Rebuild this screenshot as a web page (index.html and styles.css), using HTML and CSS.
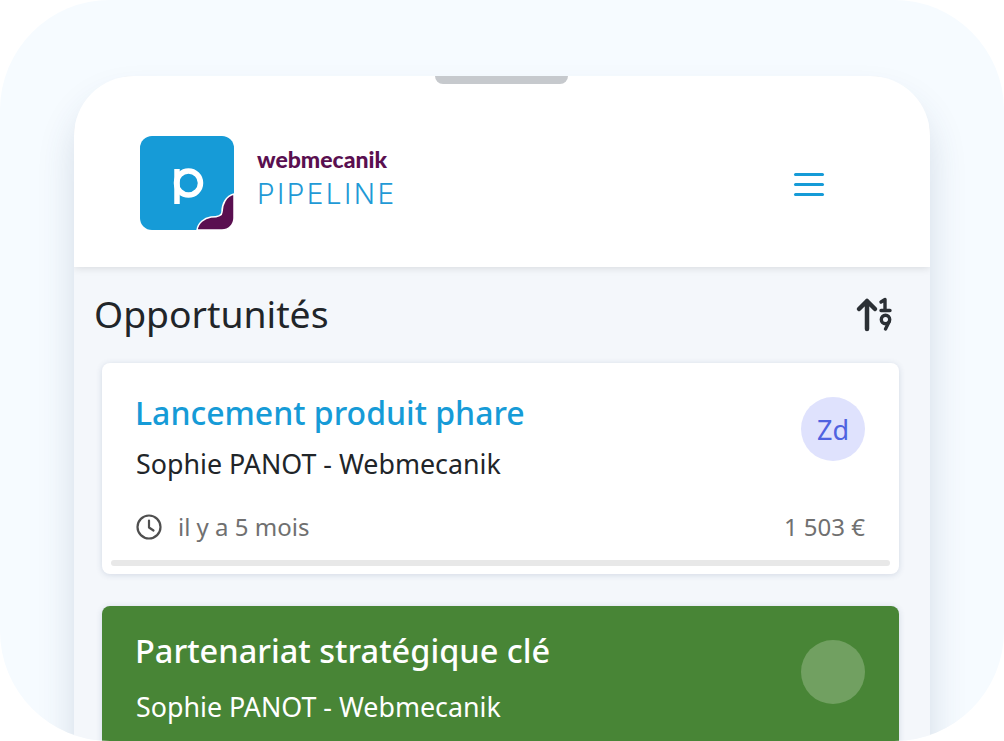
FILE: index.html
```html
<!DOCTYPE html>
<html lang="fr">
<head>
  <meta charset="UTF-8" />
  <meta name="viewport" content="width=device-width, initial-scale=1.0"/>
  <title>Webmecanik Pipeline</title>
  <link rel="stylesheet" href="styles.css">
</head>
<body>
  <div class="frame">
    <div class="phone">
      <div class="notch"></div>

      <header class="topbar">
        <div class="brand">
          <svg class="logo" width="94" height="94" viewBox="0 0 94 94">
            <rect width="94" height="94" rx="12" fill="#169bd7"/>
            <path d="M57 94 C58 87 64 82 71 81 C78 81 82 80 82 76 C82 68 86 60 94 58 V82 A12 12 0 0 1 82 94 Z" fill="#5a0f50" stroke="#fff" stroke-width="1.5"/>
            <path d="M37 68 V33" fill="none" stroke="#fff" stroke-width="5.5"/>
            <circle cx="48.5" cy="47" r="12" fill="none" stroke="#fff" stroke-width="5.5"/>
          </svg>
          <div class="brand-text">
            <div class="brand-name">webmecanik</div>
            <div class="brand-product">PIPELINE</div>
          </div>
        </div>
        <button class="menu-btn" aria-label="Menu">
          <span></span><span></span><span></span>
        </button>
      </header>

      <main class="content">
        <div class="title-row">
          <h1>Opportunités</h1>
          <svg class="sort-icon" width="38" height="36" viewBox="0 0 38 36">
            <path d="M12 33 V5 M4 13 L12 5 L20 13" fill="none" stroke="#2b3035" stroke-width="4.5" stroke-linecap="round" stroke-linejoin="round"/>
            <path d="M26 6 L30 3.5 V14 M26 14.5 H35" fill="none" stroke="#2b3035" stroke-width="3.4" stroke-linecap="round" stroke-linejoin="round"/>
            <circle cx="30.5" cy="23.5" r="4.2" fill="none" stroke="#2b3035" stroke-width="3.4"/>
            <path d="M34 26 L30.5 33" fill="none" stroke="#2b3035" stroke-width="3.4" stroke-linecap="round"/>
          </svg>
        </div>

        <article class="card">
          <div class="card-top">
            <div>
              <h2 class="card-title">Lancement produit phare</h2>
              <p class="card-contact">Sophie PANOT - Webmecanik</p>
            </div>
            <div class="avatar">Zd</div>
          </div>
          <div class="card-bottom">
            <div class="card-date">
              <svg width="26" height="26" viewBox="0 0 26 26">
                <circle cx="13" cy="13" r="11.5" fill="none" stroke="#4f4f4f" stroke-width="2.2"/>
                <path d="M13 6.5 V13.5 L17.5 16.5" fill="none" stroke="#4f4f4f" stroke-width="2.2" stroke-linecap="round" stroke-linejoin="round"/>
              </svg>
              <span>il y a 5 mois</span>
            </div>
            <div class="card-amount">1 503 €</div>
          </div>
          <div class="progress"></div>
        </article>

        <article class="card card-won">
          <div class="card-top">
            <div>
              <h2 class="card-title">Partenariat stratégique clé</h2>
              <p class="card-contact">Sophie PANOT - Webmecanik</p>
            </div>
            <div class="avatar"></div>
          </div>
        </article>
      </main>
    </div>
  </div>
</body>
</html>
```

FILE: styles.css
```css
html, body {
  margin: 0;
  height: 100%;
  background: #fff;
  overflow: hidden;
}
body {
  font-family: 'Noto Sans', 'Open Sans', sans-serif;
  color: #212529;
}
.frame {
  height: 741px;
  box-sizing: border-box;
  padding: 76px 74px 0;
  background: #f6fbff;
  border-radius: 110px;
  overflow: hidden;
}
.phone {
  position: relative;
  height: 720px;
  background: #f4f7fb;
  border-radius: 60px 60px 0 0;
  box-shadow: 0 24px 36px rgba(50, 70, 110, 0.17);
  overflow: hidden;
}
.notch {
  position: absolute;
  top: 0;
  left: 361px;
  z-index: 2;
  width: 133px;
  height: 8px;
  background: #c6c9cd;
  border-radius: 0 0 8px 8px;
}
.topbar {
  display: flex;
  justify-content: space-between;
  align-items: center;
  height: 191px;
  box-sizing: border-box;
  padding: 22px 106px 0 66px;
  background: #fff;
  box-shadow: 0 1px 8px rgba(0, 0, 0, 0.12);
  position: relative;
}
.brand {
  display: flex;
  align-items: center;
  gap: 23px;
}
.logo {
  display: block;
}
.brand-name {
  font-family: 'Lato', sans-serif;
  font-size: 23px;
  font-weight: 900;
  line-height: 24px;
  margin: -8px 0 6px;
  color: #5a0f50;
}
.brand-product {
  font-family: 'Inter', sans-serif;
  font-size: 28px;
  font-weight: 300;
  line-height: 34px;
  letter-spacing: 2.4px;
  color: #1f9ad6;
}
.menu-btn {
  display: flex;
  flex-direction: column;
  gap: 7px;
  width: 30px;
  padding: 0;
  margin-top: 3px;
  background: none;
  border: none;
}
.menu-btn span {
  height: 3px;
  background: #169bd7;
  border-radius: 2px;
}
.content {
  padding: 0 31px 0 28px;
}
.title-row {
  display: flex;
  justify-content: space-between;
  align-items: center;
  height: 96px;
  margin: 0 6px 0 -8px;
}
h1 {
  margin: -4px 0 0;
  font-size: 37.3px;
  font-weight: 400;
}
.sort-icon {
  display: block;
  margin-top: -3px;
}
.card {
  height: 211px;
  box-sizing: border-box;
  margin-bottom: 32px;
  padding: 32px 34px 0 33px;
  background: #fff;
  border-radius: 8px;
  box-shadow: 0 1px 6px rgba(40, 60, 110, 0.16);
  position: relative;
}
.card-top {
  display: flex;
  justify-content: space-between;
}
.card-title {
  margin: 0;
  font-size: 32px;
  font-weight: 500;
  line-height: 36px;
  color: #169bd7;
}
.card-contact {
  margin: 16px 0 0 1px;
  font-size: 26.8px;
  line-height: 34px;
}
.avatar {
  display: flex;
  align-items: center;
  justify-content: center;
  width: 64px;
  height: 64px;
  margin-top: 2px;
  background: #dfe2fd;
  border-radius: 50%;
  color: #4f63e0;
  font-size: 27px;
}
.card-bottom {
  display: flex;
  justify-content: space-between;
  align-items: center;
  margin-top: 29px;
  font-size: 24px;
  color: #707070;
}
.card-date {
  display: flex;
  align-items: center;
  gap: 16px;
  margin-left: 1px;
}
.card-date svg {
  display: block;
}
.progress {
  position: absolute;
  left: 9px;
  right: 9px;
  bottom: 8px;
  height: 6px;
  background: #e8e8e8;
  border-radius: 3px;
}
.card-won {
  background: #488536;
}
.card-won .card-title {
  margin-top: -5px;
  font-size: 32.5px;
  color: #fff;
}
.card-won .card-contact {
  margin-top: 21px;
  color: #fff;
}
.card-won .avatar {
  background: #71a061;
}
```
